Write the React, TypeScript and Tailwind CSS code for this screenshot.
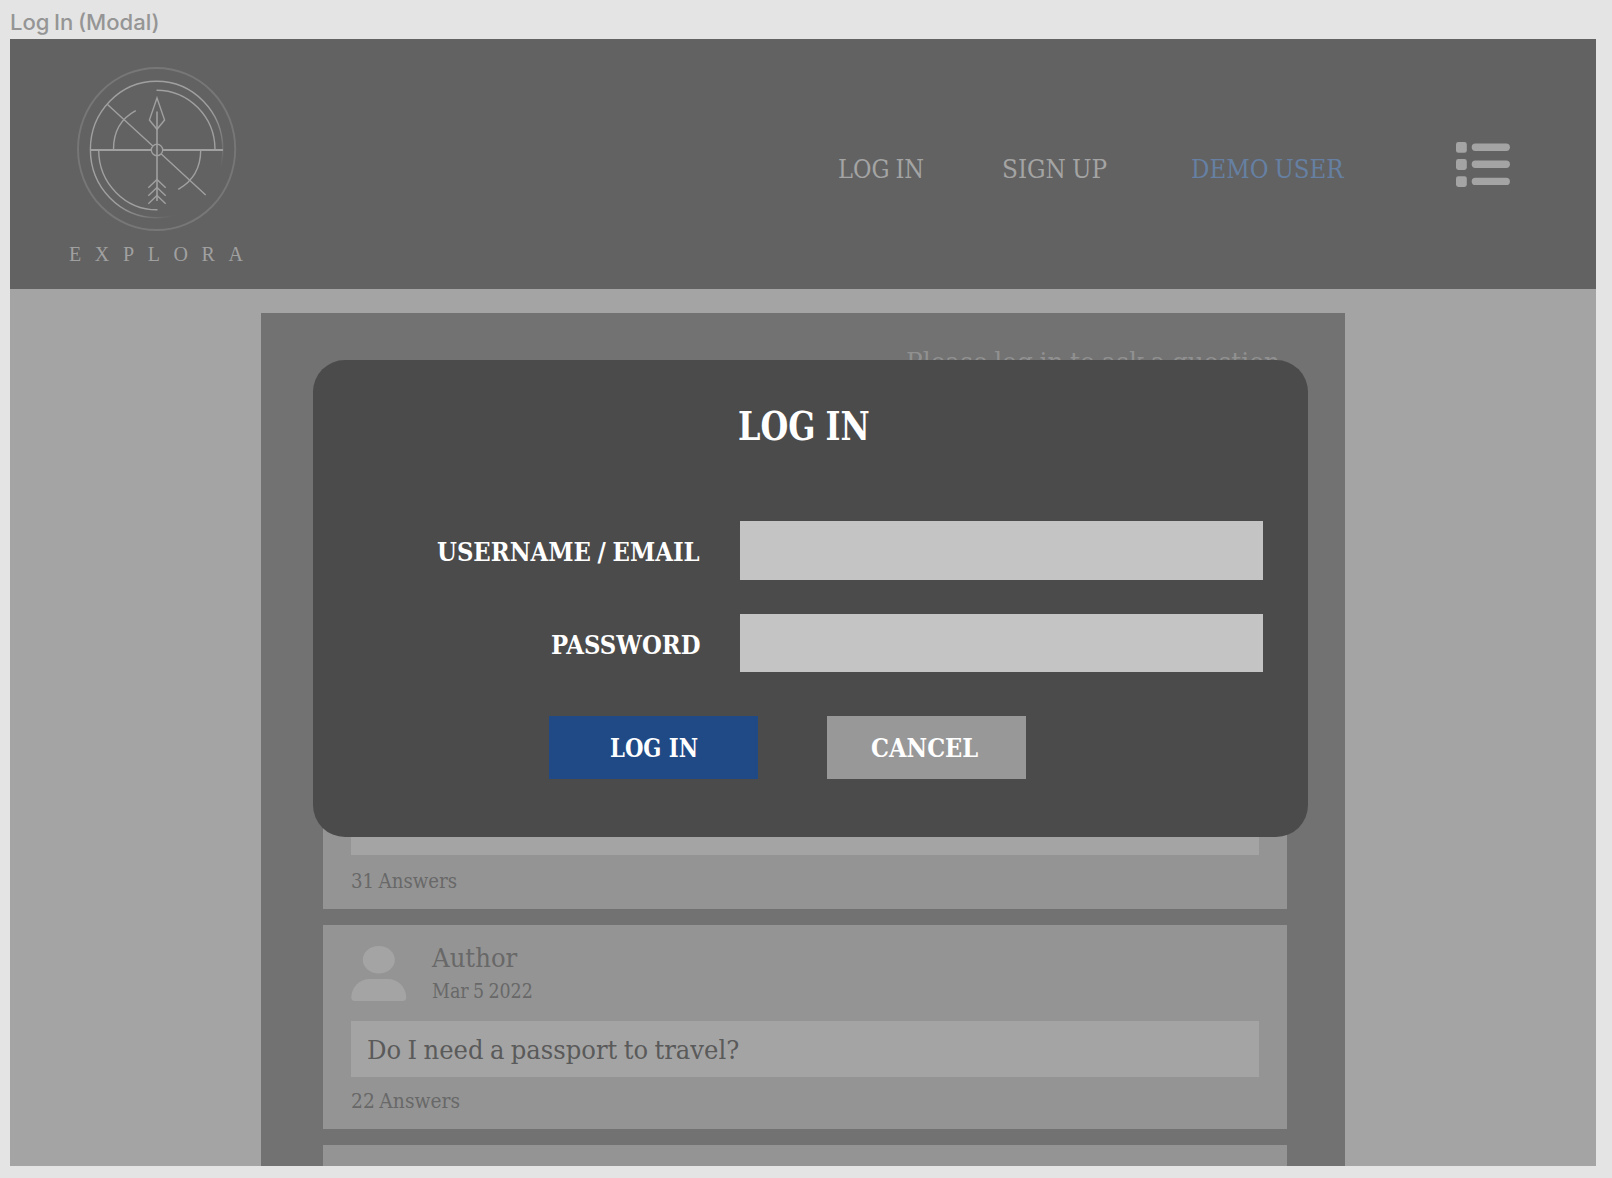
import { useLayoutEffect, useRef, useState } from "react";
import type { ReactNode } from "react";

/** One line of slab text, condensed horizontally to fill the width of its box. */
function SlabText({ className, children }: { className: string; children: ReactNode }) {
  const box = useRef<HTMLSpanElement>(null);
  const line = useRef<HTMLSpanElement>(null);
  const [scale, setScale] = useState(1);
  useLayoutEffect(() => {
    if (box.current && line.current) {
      setScale(box.current.clientWidth / line.current.offsetWidth);
    }
  }, []);
  return (
    <span ref={box} className={`block shrink-0 whitespace-nowrap text-left ${className}`}>
      <span ref={line} className="inline-block origin-left align-top" style={{ transform: `scaleX(${scale})` }}>
        {children}
      </span>
    </span>
  );
}

function Logo() {
  return (
    <div className="w-[180px] shrink-0 pt-[21px]">
      <svg width="180" height="176" viewBox="67 60 180 176" fill="none" stroke="#a0a0a0" strokeWidth="1.4" className="block">
        <defs>
          <linearGradient id="ringFade" gradientUnits="userSpaceOnUse" x1="164" y1="157" x2="198" y2="191">
            <stop offset="0" stopColor="#a0a0a0" />
            <stop offset="1" stopColor="#a0a0a0" stopOpacity="0" />
          </linearGradient>
        </defs>
        <ellipse cx="156.6" cy="149" rx="78.6" ry="81" stroke="#777777" strokeWidth="1.9" />
        <ellipse cx="156.6" cy="149.5" rx="66.2" ry="68.2" stroke="url(#ringFade)" />
        <path d="M156.5 90.2A58.5 59.5 0 0 1 215 149.5M98.7 150A58.5 59.8 0 0 0 157.5 209.8" />
        <path d="M113.5 149.5C113.5 132 121 118.500 135.800 110.700M200.700 150C200.700 167 193 181 178.300 189.300" />
        <path d="M107.500 104.500L152.800 146M161 153.800L205.700 195" />
        <path d="M90.500 150H151.500M162.500 150H223" strokeWidth="1.8" />
        <circle cx="157" cy="150" r="5.700" />
        <path d="M157 111.500V201" strokeWidth="1.600" />
        <path d="M157 98L164.600 120L157 129.300L149.400 120Z" />
        <path d="M148.300 187.800L157 179.500L165.700 187.800M148.300 195.800L157 187.500L165.700 195.800M148.300 203.700L157 195.400L165.700 203.700" />
      </svg>
      <div className="mt-2 flex w-[176px] justify-between pl-0.5 font-['Liberation_Serif',serif] text-[20px] leading-[20px] text-[#a0a0a0]">
        {"EXPLORA".split("").map((letter) => (
          <span key={letter}>{letter}</span>
        ))}
      </div>
    </div>
  );
}

function ListIcon() {
  return (
    <svg width="54" height="46" viewBox="0 0 54 46" fill="#a4a4a4" className="ml-[112px] mt-[103px] shrink-0">
      {[0, 17.1, 34.2].map((y) => (
        <g key={y}>
          <rect x="0" y={y} width="10.8" height="10.8" rx="2.4" />
          <rect x="15.700" y={y + 1.5} width="38.200" height="7.400" rx="3.700" />
        </g>
      ))}
    </svg>
  );
}

function Header() {
  return (
    <header className="flex h-[250px] items-start bg-[#626262] pl-[57px] text-[26.500px] leading-[26px] text-[#a4a4a4]">
      <Logo />
      <nav className="ml-[591px] mt-[117px] flex">
        <SlabText className="w-[86px]">LOG IN</SlabText>
        <SlabText className="ml-[78px] w-[105px]">SIGN UP</SlabText>
        <SlabText className="ml-[84px] w-[153px] text-[#6680a3]">DEMO USER</SlabText>
      </nav>
      <ListIcon />
    </header>
  );
}

function Avatar() {
  return (
    <svg width="56" height="56" viewBox="0 0 56 56" fill="#a4a4a4" className="shrink-0">
      <ellipse cx="27.800" cy="13.800" rx="16" ry="13.800" />
      <path d="M0.300 51.500C0.300 41 9 33 18.500 33H37C46.500 33 55.200 41 55.200 51.500Q55.200 55 51.500 55H4Q0.300 55 0.300 51.500Z" />
    </svg>
  );
}

type Question = { author: string; date: string; text: ReactNode; answers: string; answersWidth: string; lift: string };

function QuestionCard({ question }: { question: Question }) {
  return (
    <article className="h-[204px] shrink-0 bg-[#949494] px-7 pt-[21px] text-[#686868]">
      <div className="flex h-[56px]">
        <Avatar />
        <div className="ml-[25px]">
          <SlabText className="-mt-px w-[85px] text-[26.500px] leading-[26px]">{question.author}</SlabText>
          <SlabText className="mt-[10px] w-[101px] text-[20px] leading-[20px]">{question.date}</SlabText>
        </div>
      </div>
      <div className={`flex h-[56px] items-start bg-[#a4a4a4] pl-4 pt-[16px] text-[#5a5a5a] ${question.lift}`}>
        {question.text}
      </div>
      <SlabText className={`mt-[14px] text-[20px] leading-[20px] ${question.answersWidth}`}>{question.answers}</SlabText>
    </article>
  );
}

const questions: Question[] = [
  { author: "Author", date: "Mar 5 2022", text: null, answers: "31 Answers", answersWidth: "w-[106px]", lift: "mt-[17px] mb-[16px]" },
  {
    author: "Author",
    date: "Mar 5 2022",
    text: <SlabText className="w-[372px] text-[26.500px] leading-[26px]">Do I need a passport to travel?</SlabText>,
    answers: "22 Answers",
    answersWidth: "w-[109px]",
    lift: "mt-[19px]",
  },
];

function Board() {
  return (
    <main className="ml-[251px] mt-6 flex h-[853px] w-[1083.5px] flex-col overflow-hidden bg-[#727272] pl-[62px] pr-[57.5px]">
      <SlabText className="ml-auto mr-[7px] mt-[36px] w-[374px] text-[26.500px] leading-[26px] text-[#909090]">
        Please log in to ask a question
      </SlabText>
      <div className="mt-[330px] flex flex-col gap-4">
        {questions.map((question) => (
          <QuestionCard key={question.answers} question={question} />
        ))}
        <div className="h-[204px] shrink-0 bg-[#949494]" />
      </div>
    </main>
  );
}

function Field({ label, width, type }: { label: string; width: string; type: string }) {
  return (
    <label className="flex h-[59px] justify-end">
      <SlabText className={`mt-[18px] ${width}`}>{label}</SlabText>
      <input type={type} className="ml-10 h-[58.5px] w-[523px] bg-[#c4c4c4] outline-none" />
    </label>
  );
}

function LoginModal() {
  return (
    <form className="absolute left-[303px] top-[321px] h-[477px] w-[995px] rounded-[32px] bg-[#4b4b4b] pr-[45px] text-[26.500px] font-bold leading-[26px] text-white">
      <h2 className="flex pl-[425px] pt-[47px] text-[39px] leading-[38px]">
        <SlabText className="w-[132px]">LOG IN</SlabText>
      </h2>
      <div className="mt-[76px] flex flex-col gap-[33.5px]">
        <Field label="USERNAME / EMAIL" width="w-[263px]" type="text" />
        <Field label="PASSWORD" width="w-[149px]" type="password" />
      </div>
      <div className="mt-[43.5px] flex gap-[69px] pl-[236px]">
        <button type="button" className="flex h-[62.5px] w-[209px] bg-[#1f4a86] pl-[61px] pt-[19px]">
          <SlabText className="w-[88px]">LOG IN</SlabText>
        </button>
        <button type="button" className="flex h-[62.5px] w-[199px] bg-[#989898] pl-[44px] pt-[19px]">
          <SlabText className="w-[107px]">CANCEL</SlabText>
        </button>
      </div>
    </form>
  );
}

export default function App() {
  return (
    <div className="h-[1178px] w-[1612px] overflow-hidden bg-[#e4e4e4] pl-[10px] font-['DejaVu_Serif_Condensed','DejaVu_Serif',serif] [font-stretch:condensed] [word-spacing:-0.08em]">
      <div className="flex h-[39px] items-center pt-[5px] font-['Inter',sans-serif] text-[21.500px] font-medium text-[#959595]">
        <SlabText className="w-[150px]">Log In (Modal)</SlabText>
      </div>
      <div className="relative h-[1127px] w-[1586px] overflow-hidden bg-[#a4a4a4]">
        <Header />
        <Board />
        <LoginModal />
      </div>
    </div>
  );
}
